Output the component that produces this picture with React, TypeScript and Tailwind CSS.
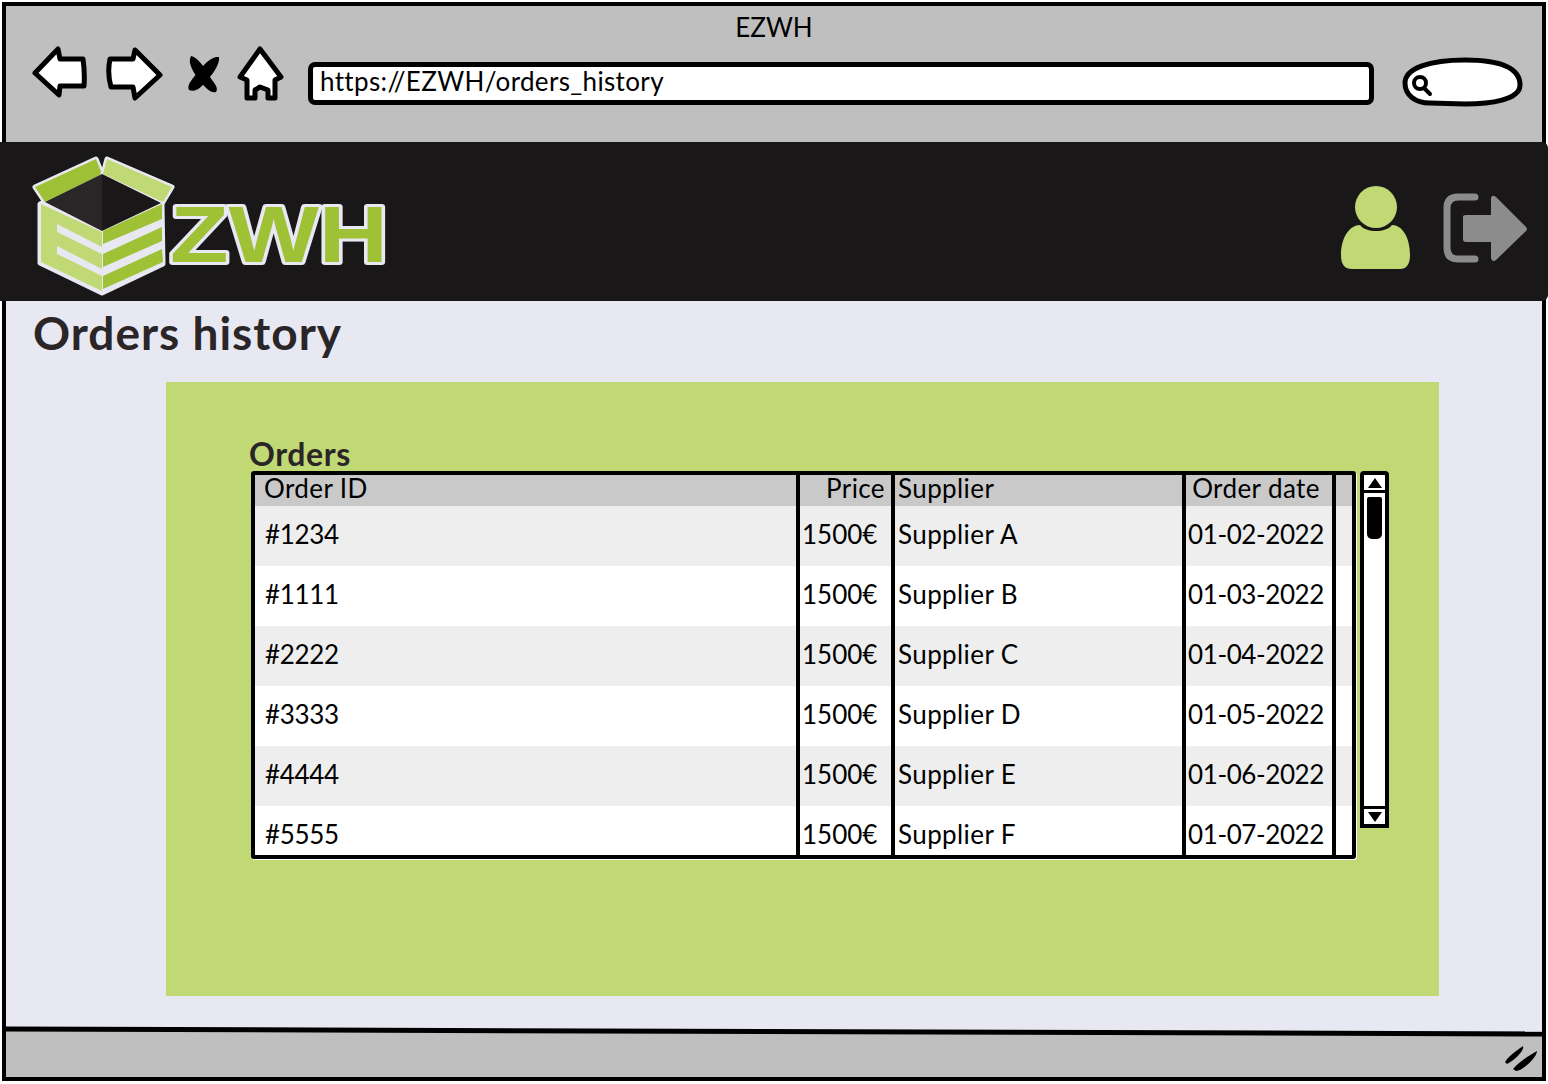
const orders = [
  { id: "#1234", price: "1500€", supplier: "Supplier A", date: "01-02-2022" },
  { id: "#1111", price: "1500€", supplier: "Supplier B", date: "01-03-2022" },
  { id: "#2222", price: "1500€", supplier: "Supplier C", date: "01-04-2022" },
  { id: "#3333", price: "1500€", supplier: "Supplier D", date: "01-05-2022" },
  { id: "#4444", price: "1500€", supplier: "Supplier E", date: "01-06-2022" },
  { id: "#5555", price: "1500€", supplier: "Supplier F", date: "01-07-2022" },
];

function BrowserIcons() {
  return (
    <div className="flex items-center">
      <svg width="60" height="56" viewBox="30 46 60 56" className="ml-[24px]">
        <path d="M35 73 L58 49 L60 59 L83 59 Q85 73 84 86 L60 86 L59 95 Z" fill="#fff" stroke="#000" strokeWidth="5" strokeLinejoin="round" />
      </svg>
      <svg width="60" height="56" viewBox="105 46 60 56" className="ml-[15px]">
        <path d="M110 59 L133 59 L135 50 L160 75 L135 98 L133 87 L111 87 Q107 73 110 59 Z" fill="#fff" stroke="#000" strokeWidth="5" strokeLinejoin="round" />
      </svg>
      <svg width="36" height="42" viewBox="186 50 36 42" className="ml-[21px]">
        <path d="M191 53 C197 54 205 64 210 74 C214 80 219 85 216 89 C210 91 203 82 199 77 C194 70 187 60 191 53 Z" fill="#000" />
        <path d="M219 54 C220 60 214 70 208 76 C202 84 196 90 189 87 C186 82 194 74 199 68 C205 60 212 53 219 54 Z" fill="#000" />
      </svg>
      <svg width="48" height="56" viewBox="236 46 48 56" className="ml-[14px]">
        <path d="M260 49 L281 77 L275 80 L275 98 L268 98 L268 90 L260 87 L255 90 L255 98 L247 98 L247 80 L240 77 Z" fill="#fff" stroke="#000" strokeWidth="5" strokeLinejoin="round" />
      </svg>
    </div>
  );
}

function Logo() {
  return (
    <svg width="360" height="150" viewBox="30 150 360 150" className="ml-[30px] mt-[4px]">
      <g stroke="#e8e8f3" strokeWidth="5" strokeLinejoin="round" paintOrder="stroke">
        <path d="M40 205 L102 176 L162 205 L163 265 L102 294 L40 264 Z" fill="#e8e8f3" />
        <path d="M35 188 L96 160 L102 175 L45 203 Z" fill="#9fc136" />
        <path d="M107 160 L172 188 L163 203 L103 175 Z" fill="#c0d974" />
      </g>
      <path d="M41 205 L102 233 L102 292 L41 263 Z" fill="#c0d974" />
      <path d="M57 225 L102 248 L102 255 L57 233 Z" fill="#e8e8f3" />
      <path d="M57 247 L102 270 L102 277 L57 255 Z" fill="#e8e8f3" />
      <path d="M45 203 L102 175 L102 232 Z" fill="#2a2527" />
      <path d="M102 175 L161 204 L102 232 Z" fill="#1a1718" />
      <path d="M103 232 L162 205 L162 220 L103 245 Z" fill="#9fc136" />
      <path d="M103 255 L162 228 L162 242 L103 268 Z" fill="#9fc136" />
      <path d="M103 277 L162 250 L163 263 L103 290 Z" fill="#9fc136" />
      <text
        x="170"
        y="263"
        fontFamily="'Liberation Sans', sans-serif"
        fontWeight="700"
        fontSize="79"
        textLength="218"
        lengthAdjust="spacingAndGlyphs"
        fill="#9fc136"
        stroke="#e8e8f3"
        strokeWidth="6"
        strokeLinejoin="round"
        paintOrder="stroke"
      >
        ZWH
      </text>
    </svg>
  );
}

function Scrollbar() {
  return (
    <div className="ml-[4px] flex h-[357px] w-[29px] flex-col rounded-t-[4px] border-[4px] border-black bg-white">
      <div className="flex h-[18px] items-center justify-center border-b-[3px] border-black">
        <div className="h-0 w-0 border-x-[7px] border-b-[10px] border-x-transparent border-b-black" />
      </div>
      <div className="mx-auto mt-[4px] h-[42px] w-[15px] rounded-b-[5px] rounded-t-[2px] bg-black" />
      <div className="flex-1" />
      <div className="flex h-[18px] items-center justify-center border-t-[3px] border-black">
        <div className="h-0 w-0 border-x-[7px] border-t-[10px] border-x-transparent border-t-black" />
      </div>
    </div>
  );
}

function OrdersTable() {
  const line = "border-r-[4px] border-black";
  return (
    <div className="h-[388px] w-[1105px] rounded-[3px] border-[4px] border-black bg-white text-[26px] text-black shadow-[1px_1px_0_#fff]">
      <div className="grid h-[31px] grid-cols-[545px_95px_291px_150px_16px] bg-[#c9c9c9] leading-[27px] tracking-[0.4px]">
        <div className={`${line} pl-[9px]`}>Order ID</div>
        <div className={`${line} pr-[6px] text-right`}>Price</div>
        <div className={`${line} pl-[3px]`}>Supplier</div>
        <div className={`${line} pr-[6px] text-center`}>Order date</div>
        <div />
      </div>
      {orders.map((o, i) => (
        <div
          key={o.id}
          className={`grid grid-cols-[545px_95px_291px_150px_16px] ${i === 5 ? "h-[49px] overflow-hidden" : "h-[60px]"} ${i % 2 === 0 ? "bg-[#eeeeee]" : "bg-white"} leading-[56px]`}
        >
          <div className={`${line} pl-[10px] tracking-[-0.3px]`}>{o.id}</div>
          <div className={`${line} pl-[2px]`}>{o.price}</div>
          <div className={`${line} pl-[3px] tracking-[0.4px]`}>{o.supplier}</div>
          <div className={`${line} pr-[6px] text-center tracking-[-0.4px]`}>{o.date}</div>
          <div />
        </div>
      ))}
    </div>
  );
}

export default function App() {
  return (
    <div className="h-[1084px] w-[1548px] bg-white p-[2px] font-[Lato,sans-serif]">
      <div className="flex h-[1079px] w-[1544px] flex-col border-[4px] border-black bg-[#e8e8f3]">
        <div className="h-[136px] shrink-0 bg-[#bfbfbf]">
          <div className="pt-[5px] text-center text-[26px] leading-[32px] text-black">EZWH</div>
          <div className="mt-[3px] flex items-start">
            <BrowserIcons />
            <div className="ml-[24px] mt-[16px] flex h-[43px] w-[1066px] items-center rounded-[7px] border-[5px] border-black bg-white pb-[6px] pl-[7px] text-[26px] leading-none tracking-[0.35px] text-black">
              https://EZWH/orders_history
            </div>
            <svg width="124" height="52" viewBox="1401 56 124 52" className="ml-[27px] mt-[10px]">
              <path d="M1405 83 C1405 68 1430 60 1465 60 C1500 60 1520 68 1520 85 C1520 100 1490 104 1465 104 L1430 103 C1415 103 1405 95 1405 83 Z" fill="#fff" stroke="#000" strokeWidth="5" />
              <circle cx="1420" cy="83" r="6" fill="none" stroke="#000" strokeWidth="4" />
              <path d="M1425 89 L1430 94" stroke="#000" strokeWidth="4" strokeLinecap="round" />
            </svg>
          </div>
        </div>

        <div className="-mx-[6px] flex h-[159px] shrink-0 items-center justify-between rounded-r-[6px] bg-[#1a1718]">
          <Logo />
          <div className="mr-[20px] mt-[12px] flex items-center gap-[30px]">
            <svg width="72" height="86" viewBox="1340 184 72 86">
              <circle cx="1376" cy="206" r="21" fill="#c0d974" />
              <path d="M1360 224 C1366 232 1386 232 1392 224 C1402 224 1410 236 1410 254 C1410 264 1406 268 1400 268 L1352 268 C1345 268 1341 264 1341 254 C1341 236 1350 224 1360 224 Z" fill="#c0d974" />
            </svg>
            <svg width="86" height="70" viewBox="1442 191 86 70">
              <path d="M1475 195 L1458 195 Q1447 195 1447 206 L1447 246 Q1447 257 1458 257 L1475 257" fill="none" stroke="#8c8c8c" strokeWidth="7" strokeLinecap="round" />
              <path d="M1463 215 Q1463 213 1466 213 L1491 213 L1491 196 Q1492 192 1496 195 L1526 225 Q1528 227 1526 229 L1496 258 Q1492 261 1491 256 L1491 240 L1466 240 Q1463 240 1463 237 Z" fill="#8c8c8c" />
            </svg>
          </div>
        </div>

        <main className="flex-1 pl-[27px]">
          <h1 className="pt-[5px] text-[46px] font-bold leading-[54px] tracking-[1px] text-[#2a2527]">Orders history</h1>
          <section className="ml-[133px] mt-[22px] h-[614px] w-[1273px] bg-[#c0d974] pl-[85px] pt-[56px]">
            <h2 className="-ml-[2px] h-[33px] text-[32px] font-bold leading-[32px] tracking-[0.6px] text-[#2a2527]">Orders</h2>
            <div className="flex items-start">
              <OrdersTable />
              <Scrollbar />
            </div>
          </section>
        </main>

        <div className="relative flex h-[46px] shrink-0 items-center justify-end bg-[#bfbfbf] pr-[4px]">
          <div className="absolute inset-x-0 -top-[2px] h-[5px] rotate-[0.186deg] bg-black" />
          <svg width="34" height="28" viewBox="1504 1046 34 28" className="mt-[10px]">
            <path d="M1505 1063 C1510 1055 1522 1048 1523 1047 C1525 1052 1512 1063 1507 1065 Z" fill="#000" />
            <path d="M1513 1070 C1520 1062 1530 1056 1537 1052 C1537 1058 1524 1071 1516 1072 Z" fill="#000" />
          </svg>
        </div>
      </div>
    </div>
  );
}
